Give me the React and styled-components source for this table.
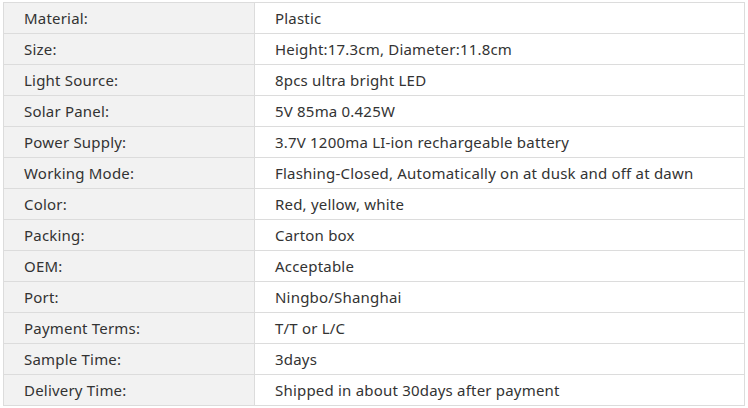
import React from 'react';
import styled, { createGlobalStyle } from 'styled-components';

const GlobalStyle = createGlobalStyle`
  body {
    margin: 0;
    background: #fff;
    font-family: "Noto Sans", "Open Sans", sans-serif;
  }
`;

const Wrapper = styled.div`
  padding: 2px 3px;
`;

const SpecTable = styled.table`
  width: 742px;
  border-collapse: collapse;
  border: 1px solid #dcdcdc;
  table-layout: fixed;
`;

const Row = styled.tr`
  height: 31px;
`;

const LabelCell = styled.td`
  width: 251px;
  box-sizing: border-box;
  padding: 1px 0 0 20px;
  background: #f2f2f2;
  border: 1px solid #dcdcdc;
  color: #333;
  font-size: 15px;
  letter-spacing: 0.2px;
  line-height: 29px;
  white-space: nowrap;
`;

const ValueCell = styled.td`
  padding: 1px 0 0 20px;
  background: #fff;
  border: 1px solid #dcdcdc;
  color: #333;
  font-size: 15px;
  letter-spacing: 0.2px;
  line-height: 29px;
  white-space: nowrap;
`;

const specs = [
  ['Material:', 'Plastic'],
  ['Size:', 'Height:17.3cm, Diameter:11.8cm'],
  ['Light Source:', '8pcs ultra bright LED'],
  ['Solar Panel:', '5V 85ma 0.425W'],
  ['Power Supply:', '3.7V 1200ma LI-ion rechargeable battery'],
  ['Working Mode:', 'Flashing-Closed, Automatically on at dusk and off at dawn'],
  ['Color:', 'Red, yellow, white'],
  ['Packing:', 'Carton box'],
  ['OEM:', 'Acceptable'],
  ['Port:', 'Ningbo/Shanghai'],
  ['Payment Terms:', 'T/T or L/C'],
  ['Sample Time:', '3days'],
  ['Delivery Time:', 'Shipped in about 30days after payment'],
];

const App = () => {
  return (
    <Wrapper>
      <GlobalStyle />
      <SpecTable>
        <tbody>
          {specs.map(([label, value]) => (
            <Row key={label}>
              <LabelCell>{label}</LabelCell>
              <ValueCell>{value}</ValueCell>
            </Row>
          ))}
        </tbody>
      </SpecTable>
    </Wrapper>
  );
};

export default App;
